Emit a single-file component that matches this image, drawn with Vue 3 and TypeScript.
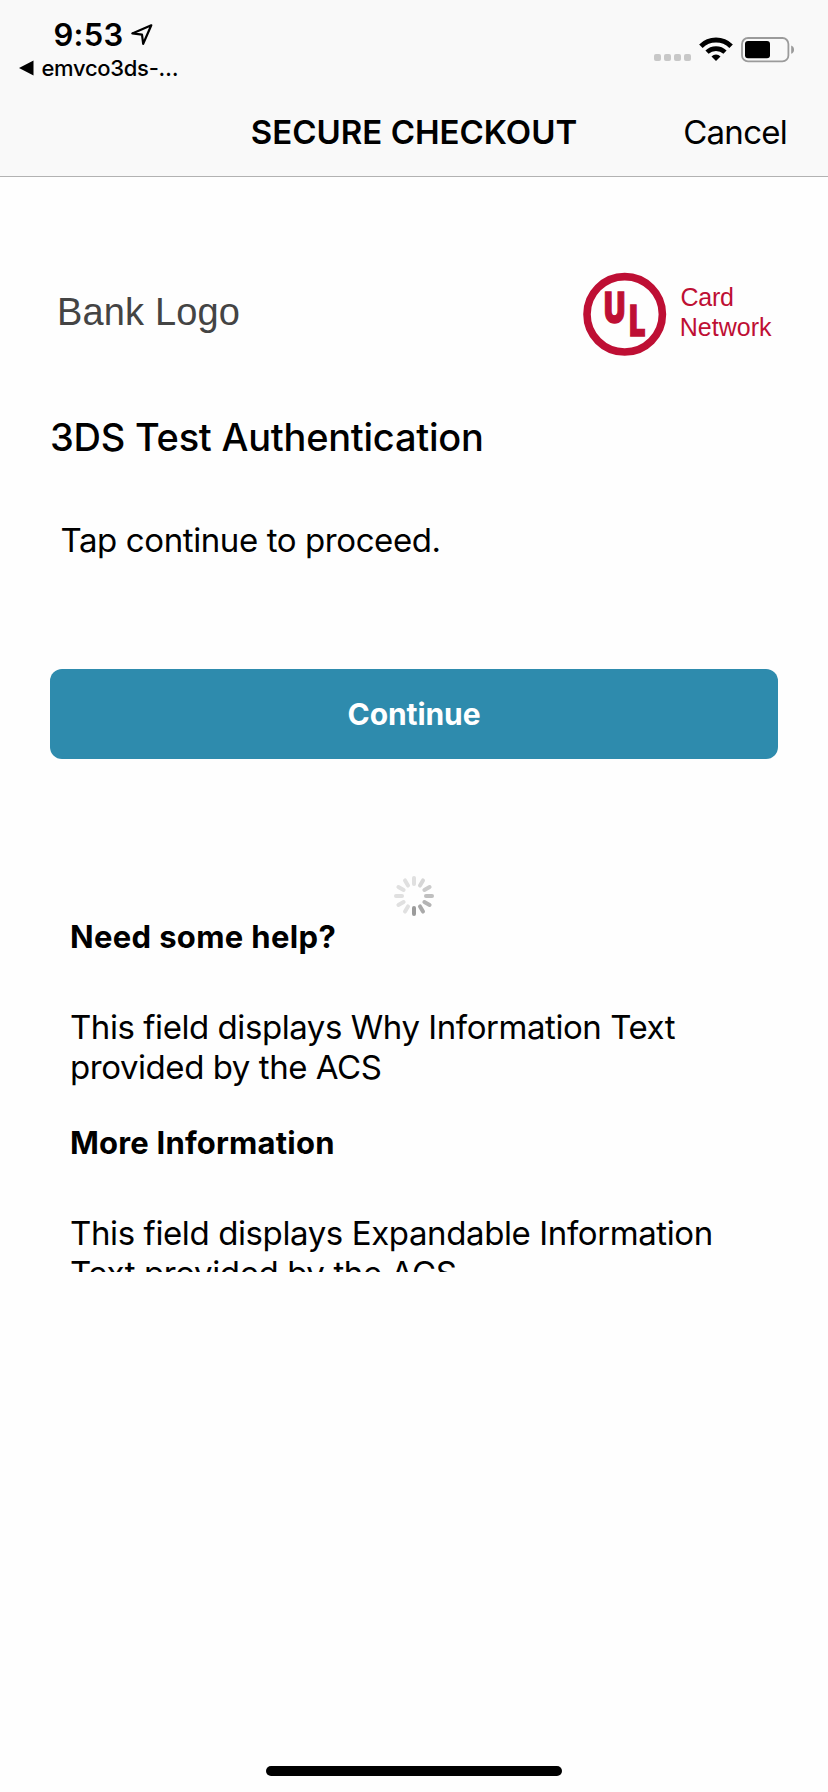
<script setup lang="ts">
interface InfoSection {
  title: string
  text: string
  tone: string
}

const sections: InfoSection[] = [
  { title: 'Need some help?', text: 'This field displays Why Information Text provided by the ACS', tone: 'why' },
  { title: 'More Information', text: 'This field displays Expandable Information Text provided by the ACS', tone: 'more' },
]

const signalDots = [0, 1, 2, 3]

// Spinner ticks clockwise from the top
const ticks = ['#e0e0e0', '#d6d6d6', '#cbcbcb', '#bfbfbf', '#b4b4b4', '#a9a9a9', '#9b9b9b', '#e0e0e0', '#e0e0e0', '#e0e0e0', '#e0e0e0', '#e0e0e0']
</script>

<template>
  <div class="screen">
    <header class="header">
      <div class="status">
        <div class="status-left">
          <div class="clock">
            <span class="time">9:53</span>
            <svg class="location" width="24" height="24" viewBox="0 0 24 24">
              <path d="M21.3 2.3 2.3 10.4 12 11.6 13.2 20.8Z" fill="none" stroke="#000" stroke-width="2.2" stroke-linejoin="round" />
            </svg>
          </div>
          <div class="back">
            <svg width="15" height="16" viewBox="0 0 15 16"><path d="M0 8 14.5 .5V15.5Z" /></svg>
            <span class="back-label">emvco3ds-…</span>
          </div>
        </div>
        <div class="status-right">
          <div class="signal"><i v-for="d in signalDots" :key="d" class="dot" /></div>
          <svg class="wifi" width="34" height="25" viewBox="0 0 34 25">
            <path d="M1.9 9.2A21.6 21.6 0 0 1 32.1 9.2" fill="none" stroke="#000" stroke-width="5" />
            <path d="M8 15.2A13 13 0 0 1 26 15.2" fill="none" stroke="#000" stroke-width="4.6" />
            <path d="M12.5 19.4A6.4 6.4 0 0 1 21.5 19.4L17 24Z" />
          </svg>
          <svg class="battery" width="54" height="26" viewBox="0 0 54 26">
            <rect x="1" y="1" width="46.4" height="23.4" rx="6" fill="none" stroke="#9b9b9b" stroke-width="1.8" />
            <rect x="4" y="4" width="25" height="17.2" rx="3" />
            <path d="M50.2 8.6Q53 9.6 53 12.7T50.2 16.8Z" fill="#9b9b9b" />
          </svg>
        </div>
      </div>
      <nav class="nav">
        <span />
        <h1 class="title">SECURE CHECKOUT</h1>
        <a class="cancel">Cancel</a>
      </nav>
    </header>

    <main class="content">
      <div class="logos">
        <span class="bank">Bank Logo</span>
        <svg class="network" width="195" height="86" viewBox="0 0 195 86">
          <circle cx="41.7" cy="42.3" r="37.7" fill="none" stroke="#be0f34" stroke-width="7.6" />
          <g class="ul">
            <text transform="translate(31.6 51.3) scale(.7 1)" text-anchor="middle">U</text>
            <text transform="translate(54.4 64.2) scale(.68 1)" text-anchor="middle">L</text>
          </g>
          <g class="network-name">
            <text x="97.4" y="33.8" class="card">Card</text>
            <text x="96.8" y="63.8">Network</text>
          </g>
        </svg>
      </div>

      <h2 class="heading">3DS Test Authentication</h2>
      <p class="prompt">Tap continue to proceed.</p>
      <button class="continue">Continue</button>

      <svg class="spinner" width="40" height="40" viewBox="-20 -20 40 40">
        <rect v-for="(c, i) in ticks" :key="i" x="-2" y="-20" width="4" height="10" rx="2" :fill="c" :transform="`rotate(${i * 30})`" />
      </svg>

      <div class="info">
        <section v-for="s in sections" :key="s.title" class="info-section" :class="s.tone">
          <h3 class="info-title">{{ s.title }}</h3>
          <p class="info-text">{{ s.text }}</p>
        </section>
      </div>
    </main>

    <div class="home-indicator" />
  </div>
</template>

<style>
body {
  margin: 0;
  background: #fefefe;
}
</style>

<style scoped>
.screen {
  width: 828px;
  height: 1792px;
  display: flex;
  flex-direction: column;
  overflow: hidden;
  background: #fefefe;
  color: #000;
  font-family: Inter, "Liberation Sans", sans-serif;
}
.header {
  box-sizing: border-box;
  height: 177px;
  background: #f9f9f9;
  border-bottom: 1px solid #b2b2b2;
}
.status {
  height: 88px;
  display: flex;
  justify-content: space-between;
}
.status-left {
  padding-top: 17px;
}
.clock {
  display: flex;
  align-items: center;
  height: 36px;
  padding-left: 53.5px;
}
.time {
  font-size: 31px;
  font-weight: 600;
  line-height: 36px;
  letter-spacing: 0.26px;
}
.location {
  margin-left: 6.5px;
}
.back {
  display: flex;
  align-items: center;
  height: 30px;
  padding-left: 18.5px;
}
.back-label {
  margin-left: 8px;
  font-size: 22px;
  font-weight: 500;
  line-height: 30px;
  letter-spacing: -0.3px;
}
.status-right {
  display: flex;
  align-items: flex-start;
  padding-right: 33px;
}
.signal {
  display: flex;
  gap: 3px;
  margin-top: 54px;
}
.dot {
  width: 7px;
  height: 7px;
  border-radius: 2px;
  background: #c8c8c8;
}
.wifi {
  margin: 37px 0 0 8.5px;
}
.battery {
  margin: 37px 0 0 8px;
}
.nav {
  height: 88px;
  display: grid;
  grid-template-columns: 1fr auto 1fr;
  align-items: center;
  padding-right: 41px;
  padding-left: 41px;
}
.title {
  margin: 0;
  font-size: 33px;
  font-weight: 600;
  line-height: 40px;
}
.cancel {
  justify-self: end;
  font-size: 33px;
  line-height: 40px;
  letter-spacing: -0.74px;
}
.content {
  display: flex;
  flex-direction: column;
  padding: 95px 50px 0;
}
.logos {
  display: flex;
  align-items: center;
  justify-content: space-between;
  height: 86px;
}
.bank {
  margin: 0 0 7px 7px;
  color: #444;
  font: 38px/44px "Liberation Sans", Arial, sans-serif;
  letter-spacing: 0.15px;
}
.ul {
  fill: #be0f34;
  stroke: #be0f34;
  stroke-width: 1.4;
  font: 900 42px Inter, sans-serif;
}
.network-name {
  fill: #be0f34;
  font: 25px "Liberation Sans", Arial, sans-serif;
}
.card {
  letter-spacing: -0.2px;
}
.heading {
  margin: 57px 0 0;
  font-size: 38px;
  font-weight: 500;
  line-height: 44px;
  letter-spacing: -0.24px;
}
.prompt {
  margin: 61px 0 0 10.5px;
  font-size: 33px;
  line-height: 40px;
  letter-spacing: -0.4px;
}
.continue {
  height: 90px;
  margin: 109px 0 0;
  padding: 0;
  border: 0;
  border-radius: 12px;
  background: #2e8bad;
  color: #fff;
  font: 700 30px/40px Inter, "Liberation Sans", sans-serif;
  letter-spacing: -0.1px;
}
.spinner {
  align-self: center;
  margin-top: 117px;
}
.info {
  height: 355px;
  margin-top: 1px;
  padding: 0 20px;
  overflow: hidden;
}
.info-section + .info-section {
  margin-top: 36px;
}
.info-title {
  margin: 0 0 50px 0;
  font-size: 31px;
  font-weight: 700;
  line-height: 40px;
  letter-spacing: 0.34px;
}
.more .info-title {
  letter-spacing: 0.2px;
}
.info-text {
  margin: 0;
  font-size: 33px;
  line-height: 40px;
  letter-spacing: -0.44px;
}
.more .info-text {
  letter-spacing: -0.39px;
}
.home-indicator {
  width: 296px;
  height: 10px;
  margin: auto auto 16px;
  border-radius: 5px;
  background: #000;
}
</style>
